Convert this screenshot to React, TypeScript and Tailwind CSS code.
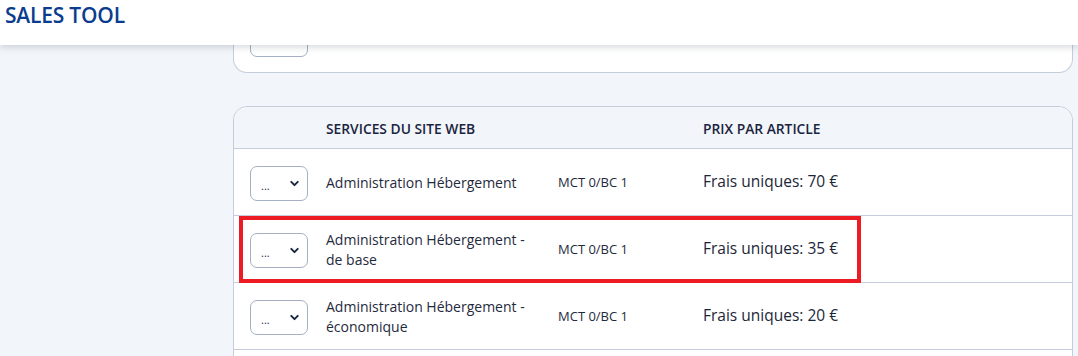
import React from 'react';
import { ChevronDown } from 'lucide-react';

const rows = [
  { name: 'Administration Hébergement', code: 'MCT 0/BC 1', price: 'Frais uniques: 70 €' },
  { name: 'Administration Hébergement - de base', code: 'MCT 0/BC 1', price: 'Frais uniques: 35 €', marked: true },
  { name: 'Administration Hébergement - économique', code: 'MCT 0/BC 1', price: 'Frais uniques: 20 €' },
];

const QtySelect: React.FC<{ empty?: boolean }> = ({ empty }) => (
  <div className="w-[58px] h-[35px] border border-[#a3afc2] rounded-[7px] bg-white flex items-center justify-between pl-[10px] pr-[6px]">
    <span className="text-[11px] text-[#1f2d44] leading-none mt-[4px]">{empty ? '' : '...'}</span>
    <ChevronDown className="w-[13px] h-[13px] text-[#16243f]" strokeWidth={3.5} />
  </div>
);

export default function App() {
  return (
    <div className="w-[1078px] h-[356px] overflow-hidden bg-[#f2f5f9] font-['Open_Sans',sans-serif]">
      <header className="relative z-10 h-[45px] bg-white shadow-[0_2px_7px_rgba(60,72,100,0.22)] px-[5px]">
        <h1 className="text-[21px] leading-[30px] font-semibold text-[#0b3d8f] tracking-[-0.2px]">SALES TOOL</h1>
      </header>

      <div className="ml-[233px] w-[840px]">
        {/* previous card, scrolled mostly out of view */}
        <div className="h-[28px] overflow-hidden flex flex-col justify-end">
          <div className="bg-white border border-t-0 border-[#c3cddb] rounded-b-[14px] pl-[16px] pb-[15px]">
            <QtySelect empty />
          </div>
        </div>

        <div className="mt-[33px] bg-white border border-[#c3cddb] rounded-t-[14px]">
          <div className="grid grid-cols-[92px_232px_145px_1fr] items-center h-[42px] bg-[#f2f5f9] rounded-t-[14px] border-b border-[#c3cddb] text-[13.8px] font-semibold text-[#1a2440] pt-[3px]">
            <span />
            <span>SERVICES DU SITE WEB</span>
            <span />
            <span>PRIX PAR ARTICLE</span>
          </div>

          {rows.map((row, i) => (
            <div
              key={i}
              className="relative grid grid-cols-[92px_232px_145px_1fr] items-center h-[67px] border-b border-[#c3cddb] text-[#1f2a3d]"
            >
              <div className="pl-[16px] pt-[2px]">
                <QtySelect />
              </div>
              <span className="text-[14px] leading-[20px] pr-[20px] pt-[2px]">{row.name}</span>
              <span className="text-[13px] pt-[2px]">{row.code}</span>
              <span className="text-[15.5px] text-[#1b2638]">{row.price}</span>
              {row.marked && (
                <div className="absolute left-[5px] top-[0px] w-[622px] h-[67px] border-[4px] border-[#ed1c24] pointer-events-none" />
              )}
            </div>
          ))}
          {/* next row, below the fold */}
          <div className="h-[67px]" />
        </div>
      </div>
    </div>
  );
}
